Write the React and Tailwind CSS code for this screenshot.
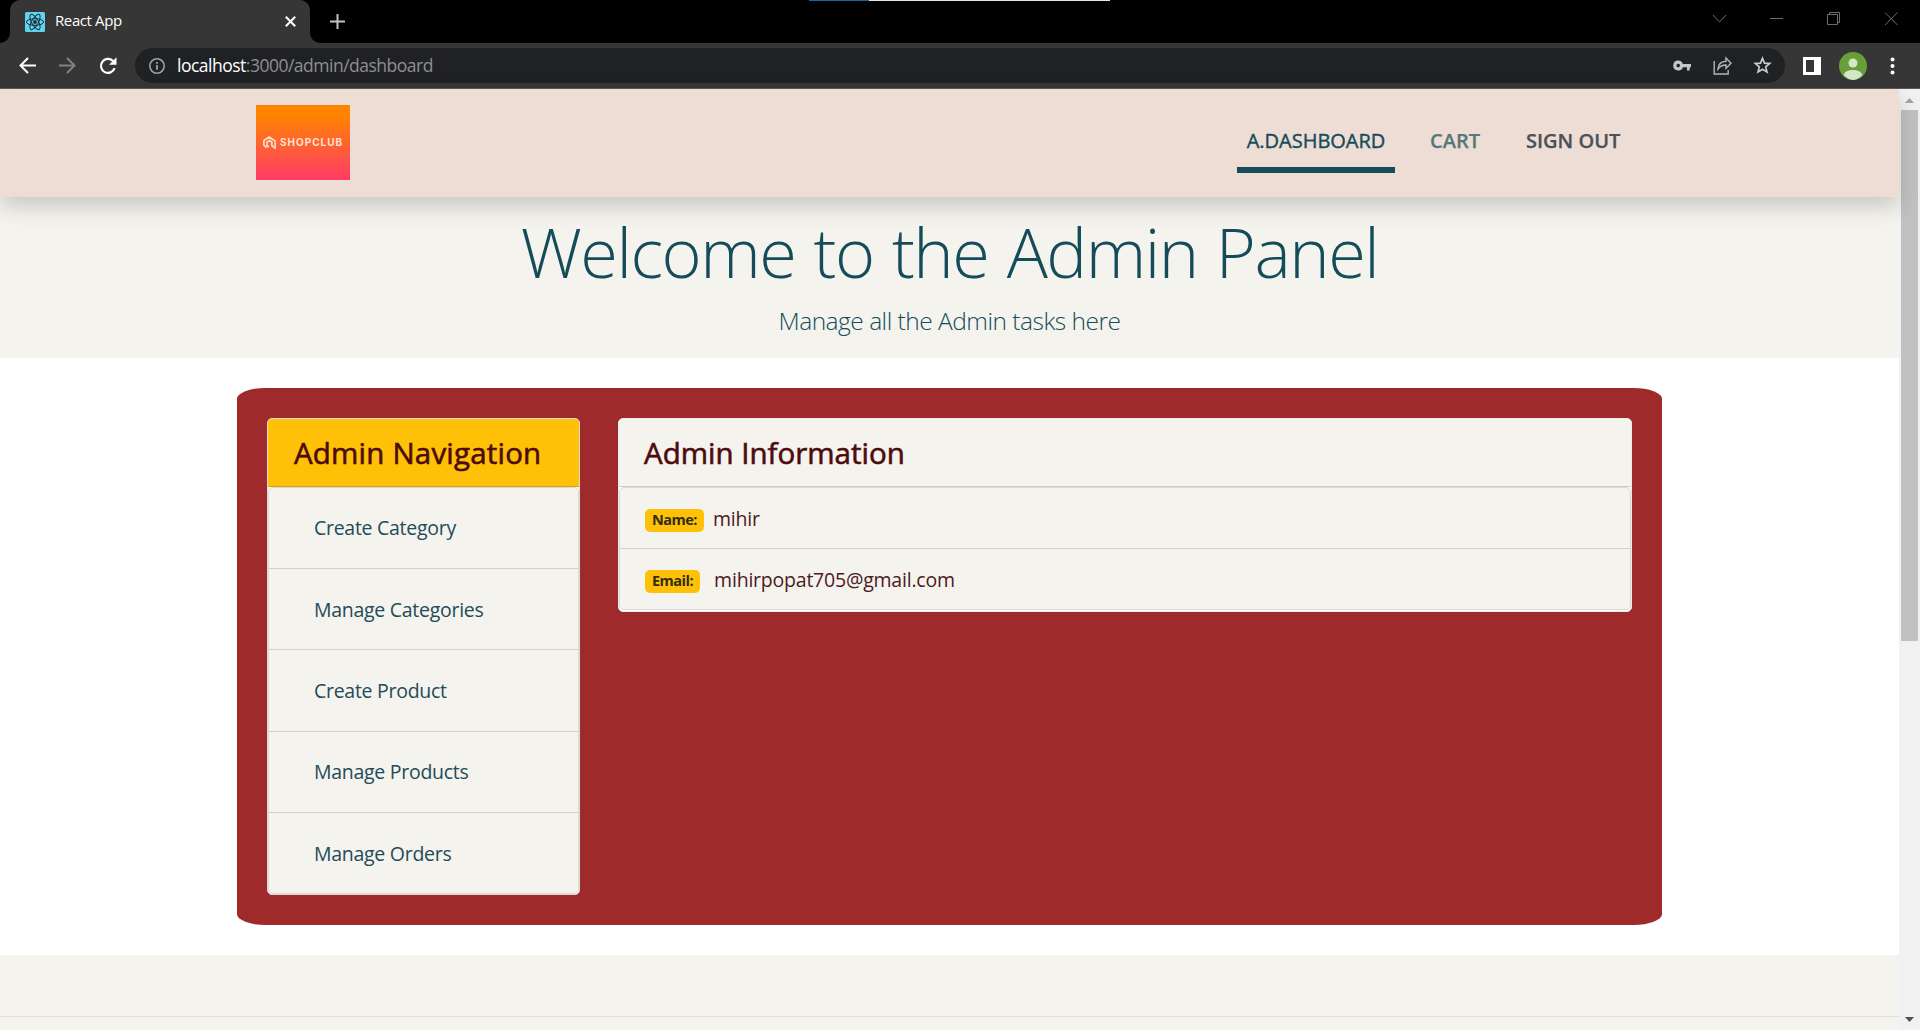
import React from "react";

const navLinks = ["Create Category", "Manage Categories", "Create Product", "Manage Products", "Manage Orders"];

function ReactMark() {
  return (
    <svg className="size-5 shrink-0" viewBox="0 0 20 20">
      <rect width="20" height="20" rx="1.5" fill="#61d3f2" />
      <g fill="none" stroke="#17313b" strokeWidth="1">
        <ellipse cx="10" cy="10" rx="8.6" ry="3.3" />
        <ellipse cx="10" cy="10" rx="8.6" ry="3.3" transform="rotate(60 10 10)" />
        <ellipse cx="10" cy="10" rx="8.6" ry="3.3" transform="rotate(120 10 10)" />
      </g>
      <circle cx="10" cy="10" r="1.9" fill="#17313b" />
    </svg>
  );
}

function TabStrip() {
  return (
    <div className="relative flex h-[43px] justify-between bg-black">
      <div className="absolute left-[809px] top-0 flex h-px w-[301px]">
        <div className="w-[60px] bg-[#1f6299]" />
        <div className="flex-1 bg-[#e6e6e6]" />
      </div>
      <div className="flex">
        <div className="flex w-[10px] items-end bg-[#363636]">
          <div className="h-full w-full rounded-br-[10px] bg-black" />
        </div>
        <div className="bg-black">
          <div className="flex h-full w-[300px] items-center rounded-t-[10px] bg-[#363636] pl-[15px] pr-[14px]">
            <ReactMark />
            <span className="-mt-[2px] ml-[10px] text-[15px] tracking-[-0.4px] text-white">React App</span>
            <svg className="ml-auto size-[11px]" viewBox="0 0 11 11" stroke="#fff" strokeWidth="2"><path d="M.8.8l9.4 9.4M10.2.8L.8 10.2" /></svg>
          </div>
        </div>
        <div className="w-[10px] bg-[#363636]">
          <div className="h-full w-full rounded-bl-[10px] bg-black" />
        </div>
        <svg className="ml-[10px] mt-[14px] size-[15px]" viewBox="0 0 15 15" stroke="#c4c4c4" strokeWidth="2"><path d="M7.5 0v15M0 7.5h15" /></svg>
      </div>
      <svg className="mr-[22px] mt-[12px] h-[14px] w-[186px]" viewBox="0 0 186 14" fill="none" stroke="#6d6d6d">
        <path d="M1 3l6.500 7L14 3M58 6.500h13M115.500 2.500h10v10h-10zM117.500 2.500v-2h10v10h-2M173 .5l12.500 12.500M185.500 .5L173 13" />
      </svg>
    </div>
  );
}

function Toolbar() {
  return (
    <div className="flex h-[46px] items-center border-b border-[#5c5856] bg-[#363636]">
      <svg className="ml-[19px] size-[17px]" viewBox="0 0 17 17" fill="none" stroke="#fff" strokeWidth="2"><path d="M17 8.500H1.500M9 1L1.500 8.500L9 16" /></svg>
      <svg className="ml-[23px] size-[17px]" viewBox="0 0 17 17" fill="none" stroke="#818181" strokeWidth="2"><path d="M0 8.500h15.500M8 1l7.500 7.500L8 16" /></svg>
      <svg className="ml-[23px] size-[18px]" viewBox="0 0 18 18" fill="none" stroke="#fff" strokeWidth="2.200"><path d="M15.600 11.200A7 7 0 1 1 13.800 3.800L15.500 5.500" /><path d="M17.500.3v7.500H10z" fill="#fff" stroke="none" /></svg>
      <div className="ml-[18px] flex h-[35px] w-[1650px] items-center rounded-full bg-[#202124] pl-[14px] pr-[13px]">
        <svg className="size-4" viewBox="0 0 16 16" fill="none" stroke="#9aa0a6" strokeWidth="1.600"><circle cx="8" cy="8" r="7.200" /><path d="M8 7v4.800M8 4v1.700" strokeWidth="1.800" /></svg>
        <span className="ml-[12px] text-[17.500px] tracking-[-0.5px] text-[#8f8f8f]"><span className="text-white">localhost</span>:3000/admin/dashboard</span>
        <svg className="ml-auto h-[12px] w-[18px]" viewBox="0 0 18 12" fill="#c3c5c8" fillRule="evenodd"><path d="M5.200.5a5 5 0 1 0 4.700 6.800H14v3.200h2.700V7.300H18V4H9.900A5 5 0 0 0 5.200.5zm0 3.300a1.800 1.800 0 1 1 0 3.600 1.800 1.800 0 0 1 0-3.600z" /></svg>
        <svg className="ml-[22px] size-[20px]" viewBox="0 0 20 20" fill="none" stroke="#b4b5b7" strokeWidth="1.400"><path d="M1.200 5v13h14v-4M5 13c.3-5 3.500-7.500 8-7.700V2l5 5.300-5 5V9c-3.500 0-6 1.200-8 4z" /></svg>
        <svg className="ml-[20px] size-[19px]" viewBox="0 0 19 19" fill="none" stroke="#c8cacd" strokeWidth="1.700"><path d="M9.500 2.300l2 4.800 5.200.4-4 3.400 1.300 5.100-4.500-2.700L5 16l1.300-5.100-4-3.400 5.200-.4z" /></svg>
      </div>
      <svg className="ml-[18px] size-[18px]" viewBox="0 0 18 18"><path d="M0 0h18v18H0z" fill="#fff" /><path d="M3 3h8v12H3z" fill="#363636" /></svg>
      <svg className="ml-[18px] size-7" viewBox="0 0 28 28"><circle cx="14" cy="14" r="14" fill="#689f38" /><circle cx="14" cy="11" r="4.500" fill="#d5e5c8" /><path d="M4.800 23.300c0-3.600 5-5.300 9.200-5.300s9.200 1.700 9.200 5.300A14 14 0 0 1 14 28a14 14 0 0 1-9.200-4.700z" fill="#d5e5c8" /></svg>
      <svg className="ml-[23px] h-[18px] w-[5px]" viewBox="0 0 5 18" fill="#fff"><circle cx="2.500" cy="2.500" r="2" /><circle cx="2.500" cy="9" r="2" /><circle cx="2.500" cy="15.500" r="2" /></svg>
    </div>
  );
}

function Logo() {
  return (
    <div className="flex h-[75px] w-[94px] items-center bg-[linear-gradient(to_bottom,#ff8500_12%,#ff3f62_95%)] pl-[7px]">
      <svg className="h-[13px] w-[13px]" viewBox="0 0 13 13" fill="none" stroke="#ffdccb" strokeWidth="1.700"><path d="M3.700 11.900L.9 9.200V4.500L6.200 1l5.900 4v7.200L8.800 9.500V6L6.500 4.600 4 6.200v3.300l2 1.500" /></svg>
      <span className="ml-[4px] font-['Inter'] text-[10px] font-bold tracking-[1px] text-[#ffe3d5]">SHOPCLUB</span>
    </div>
  );
}

function Header() {
  return (
    <header className="relative z-10 flex h-[108px] shrink-0 items-start justify-between bg-[#eeddd5] pl-[256px] pr-[268px] pt-4 shadow-[0_10px_20px_rgba(0,0,0,0.17)]">
      <Logo />
      <nav className="flex h-[68px] text-[20px] leading-[30px]">
        <a className="flex w-[158px] justify-center border-b-[6px] border-[#154c59] pt-[21px] text-[#154c59] [-webkit-text-stroke:0.4px]">A.DASHBOARD</a>
        <a className="w-[95px] pl-[35px] pt-[21px] font-semibold text-[#55777a] [-webkit-text-stroke:0.25px]">CART</a>
        <a className="w-[141px] whitespace-nowrap pl-[36px] pt-[21px] font-semibold text-[#4b5157] [-webkit-text-stroke:0.25px]">SIGN OUT</a>
      </nav>
    </header>
  );
}

function CardTitle({ className, children }) {
  return <h4 className={"h-[68px] border-b border-black/15 pt-[15px] text-[29.500px] leading-[38px] text-[#4c0b0d] [-webkit-text-stroke:0.6px] " + className}>{children}</h4>;
}

function Detail({ label, gap, children }) {
  return (
    <>
      <span className="mt-[3px] flex h-[23px] items-center rounded-[5px] bg-[#ffc107] px-[7px] text-[14.500px] font-bold leading-none tracking-[-0.500px] text-[#332b12]">{label}</span>
      <span className={gap}>{children}</span>
    </>
  );
}

function Dashboard() {
  return (
    <main className="flex h-[597px] shrink-0 justify-center bg-white py-[30px]">
      <section className="flex h-[537px] w-[1425px] items-start rounded-[2%] bg-[#9e2a2b] p-[30px]">
        <div className="h-[477px] w-[313px] overflow-hidden rounded-[5px] border border-[#e2ddd5] bg-white">
          <CardTitle className="bg-[#ffc107] pl-[26px] tracking-[0.2px]">Admin Navigation</CardTitle>
          <ul className="h-[407px] rounded-[5px] border border-[#d9d8d4] bg-[#f4f3ee] text-[19.500px] tracking-[-0.28px] text-[#234b58]">
            {navLinks.map((l, i) => (
              <li key={l} className={"flex h-[81.200px] items-center pl-[45px] " + (i < 4 ? "border-b border-[#d1d0cc]" : "")}>{l}</li>
            ))}
          </ul>
        </div>
        <div className="ml-[38px] h-[194px] flex-1 overflow-hidden rounded-[5px] border border-[#ecebe6] bg-white">
          <CardTitle className="bg-[#f4f3ee] pl-[25px]">Admin Information</CardTitle>
          <ul className="h-[123px] rounded-[5px] border border-[#d9d8d4] bg-[#f4f3ee] text-[19.500px] tracking-[-0.22px] text-[#4c1a20]">
            <li className="flex h-[61px] items-center border-b border-[#d1d0cc] pl-[25px] pt-[2px]">
              <Detail label="Name:" gap="ml-[9px]">mihir</Detail>
            </li>
            <li className="flex h-[60px] items-center pl-[25px] pt-[2px]">
              <Detail label="Email:" gap="ml-[14px]">mihirpopat705@gmail.com</Detail>
            </li>
          </ul>
        </div>
      </section>
    </main>
  );
}

function Scrollbar() {
  return (
    <div className="flex w-[21px] shrink-0 flex-col items-center bg-[#f1f1f1]">
      <svg className="mt-[9px] h-[5px] w-[9px] shrink-0" viewBox="0 0 9 5"><path d="M0 5L4.500 0 9 5z" fill="#a3a3a3" /></svg>
      <div className="mt-[7px] h-[531px] w-[17px] bg-[#c1c1c1]" />
      <svg className="mb-[8px] mt-auto h-[5px] w-[9px] shrink-0" viewBox="0 0 9 5"><path d="M0 0l4.500 5L9 0z" fill="#505050" /></svg>
    </div>
  );
}

export default function App() {
  return (
    <div className="flex h-[1030px] w-[1920px] flex-col overflow-hidden font-['Open_Sans',sans-serif]">
      <TabStrip />
      <Toolbar />
      <div className="flex flex-1">
        <div className="flex w-[1899px] shrink-0 flex-col bg-[#f4f3ee]">
          <Header />
          <div className="flex h-[161px] shrink-0 flex-col items-center text-[#154c59]">
            <h1 className="mt-[7px] text-[68.500px] font-light leading-[96px] tracking-[-1.500px] [word-spacing:2px]">Welcome to the Admin Panel</h1>
            <p className="mt-[3px] text-[24.500px] font-light leading-[36px] tracking-[-0.500px]">Manage all the Admin tasks here</p>
          </div>
          <Dashboard />
          <footer className="h-[62px] border-b border-[#e0dfda]" />
        </div>
        <Scrollbar />
      </div>
    </div>
  );
}
